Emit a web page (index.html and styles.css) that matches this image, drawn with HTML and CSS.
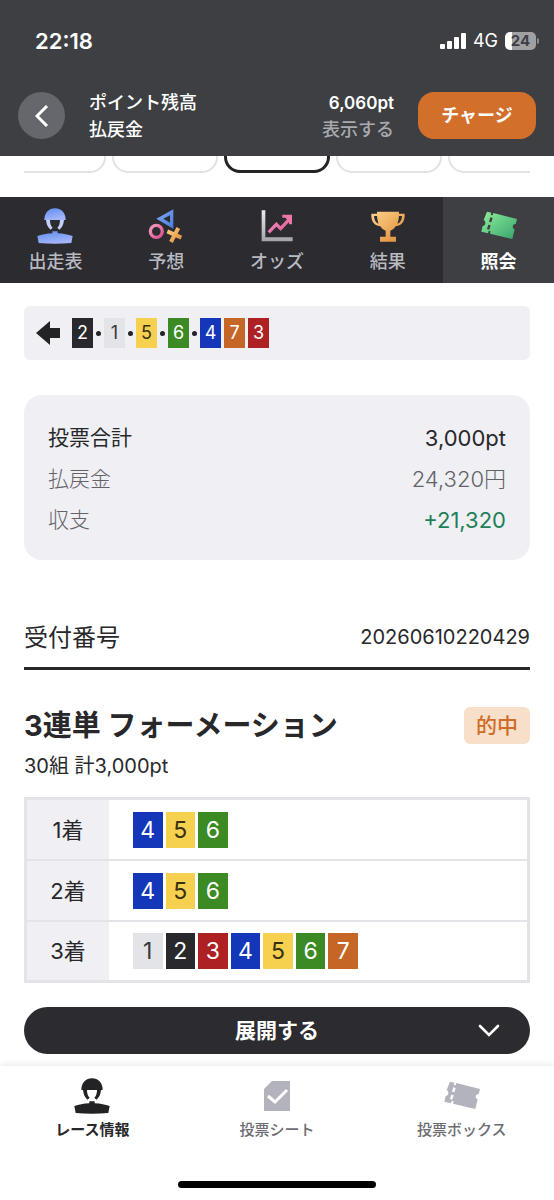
FILE: index.html
```html
<!DOCTYPE html>
<html lang="ja">
<head>
<meta charset="utf-8">
<meta name="viewport" content="width=device-width, initial-scale=1">
<title>照会</title>
<link rel="stylesheet" href="styles.css">
</head>
<body>
<svg class="defs" aria-hidden="true">
  <defs>
    <linearGradient id="blue" x1="0" y1="0" x2="0.4" y2="1"><stop offset="0" stop-color="#5e8fee"/><stop offset="1" stop-color="#a3b4fb"/></linearGradient>
    <linearGradient id="sky" x1="0" y1="0" x2="1" y2="1"><stop offset="0" stop-color="#82aaf5"/><stop offset="1" stop-color="#4a7ce0"/></linearGradient>
    <linearGradient id="pink" x1="0" y1="0" x2="1" y2="1"><stop offset="0" stop-color="#f59ac4"/><stop offset="1" stop-color="#dd4f8c"/></linearGradient>
    <linearGradient id="gold" x1="0" y1="0" x2="1" y2="1"><stop offset="0" stop-color="#ffd28a"/><stop offset="1" stop-color="#dc8a35"/></linearGradient>
    <linearGradient id="grey" x1="0" y1="0" x2="0" y2="1"><stop offset="0" stop-color="#ececef"/><stop offset="1" stop-color="#a3a3a9"/></linearGradient>
    <linearGradient id="green" x1="0" y1="0" x2="1" y2="1"><stop offset="0" stop-color="#8ff09a"/><stop offset="1" stop-color="#37a26e"/></linearGradient>
    <symbol id="rider" viewBox="0 0 108 108">
      <path d="M22 36C22 14 36 1 54 1s32 13 32 35z"/>
      <path d="M27 35h12c0 10 2 18 8 24l-6 6c-9-7-13-17-14-30zM81 35H69c0 10-2 18-8 24l6 6c9-7 13-17 14-30z"/>
      <path d="M46 70h16v6c17 1 32 4 45 8l-4 21q-49 5-98 0L1 84c13-4 28-7 45-8z"/>
    </symbol>
    <symbol id="ticket" viewBox="0 0 108 90">
      <path fill-rule="evenodd" d="M18 2l13 3-2 7 6 1 2-7 71 18-4 15c-10-1-12 13-3 16l-7 29-67-16 2-7-6-1-2 7-20-5 4-17c9-1 11-13 3-18zM28 19l7 2-4 13-7-2zM22 41l7 2-4 13-7-2z"/>
    </symbol>
  </defs>
</svg>

<header class="top">
  <div class="status">
    <time class="clock">22:18</time>
    <div class="signals">
      <svg class="bars" viewBox="0 0 26 17" fill="#fff" aria-hidden="true"><rect y="11" width="5" height="5" rx="1"/><rect x="7" y="8" width="5" height="8" rx="1"/><rect x="14" y="4" width="5" height="12" rx="1"/><rect x="21" width="5" height="16" rx="1"/></svg>
      <span>4G</span>
      <span class="battery">24</span>
    </div>
  </div>
  <div class="account">
    <button class="back" aria-label="戻る"><svg viewBox="0 0 14 22" aria-hidden="true"><path d="M12 1L2 11l10 10" fill="none" stroke="#fff" stroke-width="3"/></svg></button>
    <dl class="balance">
      <div><dt>ポイント残高</dt><dd class="points">6,060pt</dd></div>
      <div><dt>払戻金</dt><dd><button class="reveal">表示する</button></dd></div>
    </dl>
    <button class="charge">チャージ</button>
  </div>
</header>

<main>
  <div class="races"><span></span><span></span><span class="current"></span><span></span><span></span></div>

  <nav class="tabs">
    <a href="#entries"><svg class="tab-icon" viewBox="0 0 108 108" fill="url(#blue)" aria-hidden="true"><path d="M27 35h12c0 10 2 18 8 24l-6 6c-9-7-13-17-14-30zM81 35H69c0 10-2 18-8 24l6 6c9-7 13-17 14-30z" fill="#c3cffc"/><path d="M22 36C22 14 36 1 54 1s32 13 32 35z"/><path d="M46 70h16v6c17 1 32 4 45 8l-4 21q-49 5-98 0L1 84c13-4 28-7 45-8z"/></svg>出走表</a>
    <a href="#forecast"><svg class="tab-icon" viewBox="0 0 108 108" aria-hidden="true"><path d="M76 4v58L25 32zM66 22v22L46 32z" fill="url(#sky)" fill-rule="evenodd"/><circle cx="25" cy="70" r="18" fill="none" stroke="url(#pink)" stroke-width="10"/><path d="M58 70l42 19M91 60L69 102" fill="none" stroke="url(#gold)" stroke-width="12"/></svg>予想</a>
    <a href="#odds"><svg class="tab-icon" viewBox="0 0 108 108" aria-hidden="true"><path d="M8 7h11v81h82v12H8z" fill="url(#grey)"/><path d="M29 73l23-24 13 13 25-27" fill="none" stroke="url(#pink)" stroke-width="10"/><path d="M70 20h29v29h-9V29H70z" fill="#e977a8"/><path d="M76 26h17v17z" fill="#e977a8"/></svg>オッズ</a>
    <a href="#result"><svg class="tab-icon" viewBox="0 0 108 108" fill="url(#gold)" aria-hidden="true"><path fill-rule="evenodd" d="M21 11h66v6h17c1 21-6 35-27 38-5 8-10 11-16 13v18h17v15H30V86h17V68c-6-2-11-5-16-13C10 52 3 38 4 17h17zM12 24c1 13 5 20 14 23-3-7-4-14-5-23zM96 24h-9c-1 9-2 16-5 23 9-3 13-10 14-23z"/></svg>結果</a>
    <a href="#inquiry" class="active" aria-current="page"><svg class="tab-icon" fill="url(#green)" aria-hidden="true"><use href="#ticket"/></svg>照会</a>
  </nav>

  <div class="content">
    <div class="lineup">
      <svg class="arrow" viewBox="0 0 24 24" aria-hidden="true"><path d="M0 12L14 0v7h10v10H14v7z" fill="#232326"/></svg>
      <b class="chip n2">2</b><i></i><b class="chip n1">1</b><i></i><b class="chip n5">5</b><i></i><b class="chip n6">6</b><i></i><b class="chip n4">4</b><b class="chip n7">7</b><b class="chip n3">3</b>
    </div>

    <dl class="summary">
      <div class="total"><dt>投票合計</dt><dd>3,000pt</dd></div>
      <div><dt>払戻金</dt><dd>24,320円</dd></div>
      <div><dt>収支</dt><dd class="gain">+21,320</dd></div>
    </dl>

    <div class="receipt"><span>受付番号</span><span class="number">20260610220429</span></div>

    <section class="bet">
      <div class="bet-head"><h2>3連単 フォーメーション</h2><span class="hit">的中</span></div>
      <p>30組 計3,000pt</p>
      <table>
        <tr><th scope="row">1着</th><td><div class="picks"><b class="chip n4">4</b><b class="chip n5">5</b><b class="chip n6">6</b></div></td></tr>
        <tr><th scope="row">2着</th><td><div class="picks"><b class="chip n4">4</b><b class="chip n5">5</b><b class="chip n6">6</b></div></td></tr>
        <tr><th scope="row">3着</th><td><div class="picks"><b class="chip n1">1</b><b class="chip n2">2</b><b class="chip n3">3</b><b class="chip n4">4</b><b class="chip n5">5</b><b class="chip n6">6</b><b class="chip n7">7</b></div></td></tr>
      </table>
      <button class="expand"><span>展開する</span><svg viewBox="0 0 22 13" aria-hidden="true"><path d="M2 2l9 9 9-9" fill="none" stroke="#fff" stroke-width="2.6" stroke-linecap="round"/></svg></button>
    </section>
  </div>
</main>

<footer class="bottom">
  <nav class="menu">
    <a href="#race" class="active"><svg class="menu-icon" fill="#232326" aria-hidden="true"><use href="#rider"/></svg>レース情報</a>
    <a href="#sheet"><svg class="menu-icon" viewBox="0 0 36 36" aria-hidden="true"><path d="M13 3h18v30H5V11z" fill="#b3b3bd"/><path d="M9 18l7 6 12-12" fill="none" stroke="#fff" stroke-width="3"/></svg>投票シート</a>
    <a href="#box"><svg class="menu-icon" fill="#b3b3bd" aria-hidden="true"><use href="#ticket"/></svg>投票ボックス</a>
  </nav>
  <div class="home"></div>
</footer>
</body>
</html>
```
FILE: styles.css
```css
* { box-sizing: border-box; }

body {
  margin: 0;
  min-height: 100vh;
  display: flex;
  flex-direction: column;
  background: #fff;
  color: #28282b;
  font-family: Inter, "Noto Sans CJK JP", sans-serif;
  font-size: 18px;
  line-height: 26px;
}

dl, dd, h2, p { margin: 0; }
a { color: inherit; text-decoration: none; }
button { font: inherit; color: inherit; border: 0; padding: 0; background: none; cursor: pointer; }
.defs { position: absolute; width: 0; height: 0; }

.top { padding-bottom: 17px; background: #3e3f43; color: #fff; }
.status {
  display: flex;
  justify-content: space-between;
  align-items: center;
  height: 82px;
  padding: 0 18px 0 35px;
}
.clock { font-size: 22px; font-weight: 600; }
.signals { display: flex; align-items: center; gap: 7px; font-size: 18px; }
.bars { width: 26px; height: 17px; }
.battery {
  position: relative;
  width: 31px;
  height: 18px;
  border-radius: 5px;
  background: linear-gradient(90deg, #fff 24%, #a0a0a3 24%);
  color: #3e3f43;
  font-size: 15px;
  font-weight: 700;
  line-height: 18px;
  text-align: center;
}
.battery::after {
  content: "";
  position: absolute;
  right: -3px;
  top: 6px;
  width: 2px;
  height: 6px;
  border-radius: 0 2px 2px 0;
  background: #8c8c90;
}
.account { display: flex; align-items: center; padding: 10px 18px 0; height: 57px; }
.back {
  display: grid;
  place-items: center;
  width: 47px;
  height: 47px;
  border-radius: 50%;
  background: #66676c;
}
.back svg { width: 14px; height: 22px; }
.balance { flex: 1; padding: 2px 24px 0; font-weight: 500; }
.balance div { display: flex; justify-content: space-between; height: 27px; }
.balance .points { font-size: 17px; font-weight: 600; }
.reveal { color: #a9aab0; font-weight: 500; }
.charge {
  width: 118px;
  height: 47px;
  border-radius: 16px;
  background: #d2702b;
  font-weight: 700;
}

.races {
  display: flex;
  justify-content: center;
  align-items: flex-end;
  gap: 6px;
  height: 17px;
  margin: 0 24px 24px;
  overflow: hidden;
}
.races span {
  flex: 0 0 106px;
  height: 48px;
  border: 2px solid #e2e3e7;
  border-radius: 16px;
}
.races .current { border: 3px solid #232326; }

.tabs { display: grid; grid-template-columns: repeat(5, 1fr); background: #2b2b30; color: #b9bac0; }
.tabs a {
  display: flex;
  flex-direction: column;
  align-items: center;
  gap: 5px;
  height: 86px;
  padding-top: 11px;
  font-weight: 500;
}
.tabs .active { background: #3e3f43; color: #fff; font-weight: 700; }
.tab-icon { width: 36px; height: 36px; }

.content { padding: 23px 24px 12px; }
.chip { display: grid; place-items: center; font-weight: 400; color: #fff; }
.n1 { background: #e3e4e8; color: #38383c; }
.n2 { background: #28282d; }
.n3 { background: #ae2123; }
.n4 { background: #1437ba; }
.n5 { background: #f6d04f; color: #38300f; }
.n6 { background: #3b8a23; }
.n7 { background: #c56626; }

.lineup {
  display: flex;
  align-items: center;
  gap: 3px;
  height: 54px;
  padding: 0 12px;
  border-radius: 6px;
  background: #efeff4;
}
.lineup .chip { width: 21px; height: 30px; }
.lineup i { width: 5px; height: 5px; border-radius: 50%; background: #232326; }
.arrow { width: 24px; height: 24px; margin-right: 9px; }

.summary {
  display: grid;
  gap: 13px;
  margin-top: 35px;
  padding: 29px 24px 26px;
  border-radius: 18px;
  background: #efeff4;
  color: #626267;
  font-weight: 300;
}
.summary div { display: flex; justify-content: space-between; line-height: 28px; }
.summary dt { font-size: 21px; }
.summary dd { font-size: 22px; }
.summary .total { color: #28282b; font-weight: 400; }
.summary .gain { color: #1f7f58; font-weight: 400; }

.receipt {
  display: flex;
  justify-content: space-between;
  align-items: center;
  margin-top: 60px;
  padding-bottom: 12px;
  border-bottom: 3px solid #28282b;
  font-size: 24px;
  line-height: 35px;
}
.receipt .number { font-size: 20px; }

.bet-head { display: flex; justify-content: space-between; align-items: center; margin-top: 35px; }
.bet-head h2 { padding-top: 2px; font-size: 29px; line-height: 38px; font-weight: 700; }
.hit {
  padding: 0 12px;
  border-radius: 6px;
  background: #f7dfca;
  color: #cf6c27;
  font-size: 21px;
  font-weight: 500;
  line-height: 37px;
}
.bet p { margin-top: 7px; font-size: 20px; line-height: 28px; }
.bet table {
  width: 100%;
  margin-top: 17px;
  border: 3px solid #e3e4e8;
  border-spacing: 0;
}
.bet th, .bet td { height: 61px; padding: 0; border-bottom: 2px solid #e3e4e8; }
.bet tr:last-child > * { height: 58px; border-bottom: 0; }
.bet th { width: 82px; background: #efeff4; font-size: 22px; font-weight: 400; }
.bet td { padding-left: 24px; }
.picks { display: grid; grid-template-columns: repeat(7, 1fr); gap: 3px; width: 225px; }
.picks .chip { height: 36px; font-size: 23px; }

.expand {
  display: grid;
  grid-template-columns: 1fr auto 1fr;
  align-items: center;
  width: 100%;
  height: 47px;
  margin-top: 24px;
  padding: 0 30px;
  border-radius: 24px;
  background: #2b2b30;
  color: #fff;
  font-size: 21px;
  font-weight: 700;
}
.expand span { grid-column: 2; }
.expand svg { justify-self: end; width: 22px; height: 13px; }

.bottom {
  margin-top: auto;
  padding: 12px 0;
  background: #fff;
  box-shadow: 0 -2px 6px rgba(0, 0, 0, 0.08);
}
.menu { display: grid; grid-template-columns: repeat(3, 1fr); }
.menu a {
  display: flex;
  flex-direction: column;
  align-items: center;
  gap: 4px;
  color: #6c6c72;
  font-size: 15px;
  line-height: 24px;
  font-weight: 500;
}
.menu .active { color: #28282b; font-weight: 700; }
.menu-icon { width: 36px; height: 36px; }
.home { width: 198px; height: 7px; margin: 39px auto 0; border-radius: 4px; background: #000; }
```
